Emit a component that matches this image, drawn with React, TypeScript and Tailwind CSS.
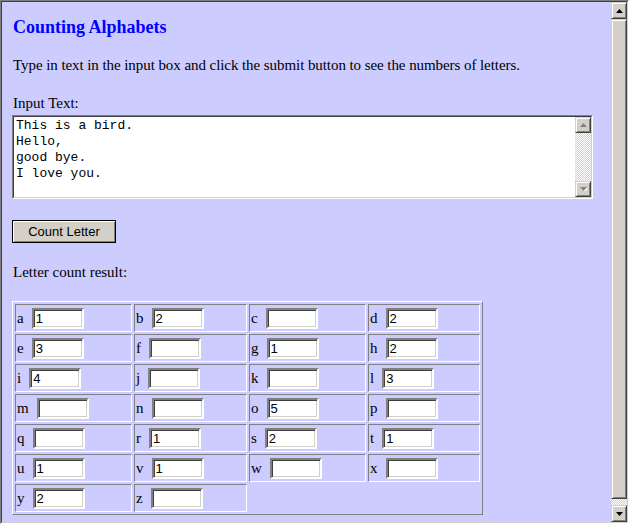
import React from "react";

const cells: [string, string][] = [
  ["a", "1"], ["b", "2"], ["c", ""], ["d", "2"],
  ["e", "3"], ["f", ""], ["g", "1"], ["h", "2"],
  ["i", "4"], ["j", ""], ["k", ""], ["l", "3"],
  ["m", ""], ["n", ""], ["o", "5"], ["p", ""],
  ["q", ""], ["r", "1"], ["s", "2"], ["t", "1"],
  ["u", "1"], ["v", "1"], ["w", ""], ["x", ""],
  ["y", "2"], ["z", ""],
];

function Arrow({ up, disabled }: { up: boolean; disabled?: boolean }) {
  const fill = disabled ? "#808080" : "#000000";
  return (
    <svg width="7" height="4" viewBox="0 0 7 4" className="block">
      {disabled && (
        <polygon
          points={up ? "1,5 4.5,1 8,5" : "1,1 8,1 4.5,5"}
          fill="#ffffff"
        />
      )}
      <polygon points={up ? "0,4 3.5,0 7,4" : "0,0 7,0 3.5,4"} fill={fill} />
    </svg>
  );
}

function ScrollButton({ up, disabled, h }: { up: boolean; disabled?: boolean; h: string }) {
  return (
    <div
      className={`${h} w-full bg-[#d4d0c8] border border-t-[#d4d0c8] border-l-[#d4d0c8] border-b-[#404040] border-r-[#404040] shadow-[inset_1px_1px_0_#ffffff,inset_-1px_-1px_0_#808080] flex items-center justify-center`}
    >
      <Arrow up={up} disabled={disabled} />
    </div>
  );
}

export default function App() {
  return (
    <div className="w-[629px] h-[524px] border border-t-[#808080] border-l-[#808080] border-b-white border-r-white">
      <div className="w-full h-full flex border border-t-[#404040] border-l-[#404040] border-b-[#d4d0c8] border-r-[#d4d0c8]">
        {/* page content */}
        <div className="flex-1 bg-[#ccccff] overflow-hidden pl-[10px] font-['Liberation_Serif',serif] text-black">
          <h1 className="pt-[15px] text-[18px] leading-[21px] font-bold text-[#0000ff] pl-[1px]">
            Counting Alphabets
          </h1>
          <p className="mt-[19px] text-[15px] leading-[17px] tracking-[-0.07px] pl-[1px]">
            Type in text in the input box and click the submit button to see the numbers of letters.
          </p>
          <p className="mt-[21px] text-[15px] leading-[17px] pl-[1px]">Input Text:</p>

          {/* textarea */}
          <div className="mt-[3px] w-[581px] h-[84px] flex border border-t-[#808080] border-l-[#808080] border-b-white border-r-white">
            <div className="flex-1 flex border border-t-[#404040] border-l-[#404040] border-b-[#d4d0c8] border-r-[#d4d0c8] bg-white">
              <pre className="flex-1 pl-[2px] pt-[1px] font-['Liberation_Mono',monospace] text-[13px] leading-[16px] text-black">
{`This is a bird.
Hello,
good bye.
I love you.`}
              </pre>
              <div className="w-[16px] flex flex-col">
                <ScrollButton up disabled h="h-[16px]" />
                <div className="flex-1 bg-[image:repeating-conic-gradient(#d4d0c8_0_25%,#ffffff_0_50%)] bg-[length:2px_2px]" />
                <ScrollButton up={false} disabled h="h-[16px]" />
              </div>
            </div>
          </div>

          {/* button */}
          <button className="mt-[21px] block w-[104px] h-[23px] bg-[#d4d0c8] border border-black shadow-[inset_1px_1px_0_#ffffff,inset_-1px_-1px_0_#808080] font-['Liberation_Sans',sans-serif] text-[13px] leading-[21px] text-black text-center">
            Count Letter
          </button>

          <p className="mt-[21px] text-[15px] leading-[17px] pl-[1px]">Letter count result:</p>

          {/* table */}
          <div className="mt-[20px] inline-grid grid-cols-[117px_113px_117px_112px] auto-rows-[28px] gap-[2px] p-[2px] border border-t-[#ffffff] border-l-[#ffffff] border-b-[#808080] border-r-[#808080]">
            {cells.map(([l, v]) => (
              <div
                key={l}
                className="flex items-baseline gap-[8px] pl-[1px] pt-[3px] border border-t-[#808080] border-l-[#808080] border-b-white border-r-white text-[15px] leading-[17px]"
              >
                <span>{l}</span>
                <input
                  readOnly
                  value={v}
                  className="w-[52px] h-[21px] px-[2px] bg-white border-2 border-t-[#808080] border-l-[#808080] border-b-white border-r-white shadow-[inset_1px_1px_0_#404040,inset_-1px_-1px_0_#d4d0c8] font-['Liberation_Sans',sans-serif] text-[13px] text-black outline-none"
                />
              </div>
            ))}
          </div>
        </div>

        {/* window scrollbar */}
        <div className="w-[16px] flex flex-col bg-[#d4d0c8]">
          <ScrollButton up h="h-[17px]" />
          <div className="flex-1 bg-[#d4d0c8] border border-t-[#d4d0c8] border-l-[#d4d0c8] border-b-[#404040] border-r-[#404040] shadow-[inset_1px_1px_0_#ffffff,inset_-1px_-1px_0_#808080]" />
          <div className="h-[6px] bg-[image:repeating-conic-gradient(#d4d0c8_0_25%,#ffffff_0_50%)] bg-[length:2px_2px]" />
          <ScrollButton up={false} h="h-[17px]" />
        </div>
      </div>
    </div>
  );
}
